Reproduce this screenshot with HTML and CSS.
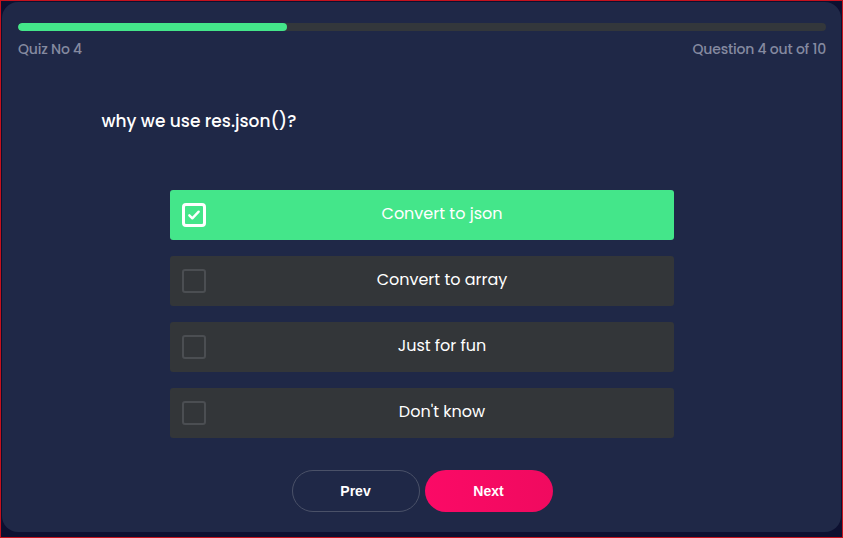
FILE: index.html
```html
<!DOCTYPE html>
<html lang="en">
<head>
<meta charset="utf-8">
<title>Quiz</title>
<link rel="stylesheet" href="styles.css">
</head>
<body>
<main class="card">
  <div class="progress"><div class="progress-fill" style="width: 33.3%"></div></div>
  <div class="meta">
    <span>Quiz No 4</span>
    <span>Question 4 out of 10</span>
  </div>
  <h1 class="question">why we use res.json()?</h1>
  <ul class="options">
    <li class="option selected">
      <span class="box"><svg viewBox="0 0 24 24" width="16" height="16"><path d="M5 12.5l4.5 4.5L19 7" fill="none" stroke="#fff" stroke-width="3.6" stroke-linecap="round" stroke-linejoin="round"/></svg></span>
      <span class="label">Convert to json</span>
    </li>
    <li class="option"><span class="box"></span><span class="label">Convert to array</span></li>
    <li class="option"><span class="box"></span><span class="label">Just for fun</span></li>
    <li class="option"><span class="box"></span><span class="label">Don't know</span></li>
  </ul>
  <div class="nav">
    <button class="btn btn-prev">Prev</button>
    <button class="btn btn-next">Next</button>
  </div>
</main>
</body>
</html>
```
FILE: styles.css
```css
* { box-sizing: border-box; }
html, body { margin: 0; height: 100%; }
body {
  background: #0d1030;
  border: 1px solid #c4121d;
  padding: 1px 1px 5px 1px;
  font-family: "Poppins", "Open Sans", "Noto Sans", sans-serif;
}
.card {
  height: 100%;
  background: #1f2847;
  border-radius: 16px;
  padding: 21px 15px 0 16px;
  display: flex;
  flex-direction: column;
}
.progress {
  height: 8px;
  background: #33373b;
  border-radius: 4px;
  overflow: hidden;
}
.progress-fill {
  height: 100%;
  background: #44e68a;
  border-radius: 4px;
}
.meta {
  display: flex;
  justify-content: space-between;
  margin-top: 8px;
  font-size: 14px;
  font-weight: 500;
  line-height: 20px;
  color: #858aa0;
  letter-spacing: -0.2px;
}
.question {
  width: 641px;
  margin: 51px auto 0;
  padding-right: 1px;
  font-size: 17px;
  font-weight: 500;
  line-height: 22px;
  color: #fff;
}
.options {
  list-style: none;
  margin: 58px auto 0;
  padding: 0;
  width: 504px;
  display: flex;
  flex-direction: column;
  gap: 16px;
}
.option {
  height: 50px;
  background: #333639;
  border-radius: 3px;
  display: flex;
  align-items: center;
  padding-left: 12px;
  color: #fff;
  font-size: 16px;
}
.option.selected { background: #44e68a; }
.box {
  flex: none;
  width: 24px;
  height: 24px;
  border: 2px solid #4b4e52;
  border-radius: 3px;
  display: flex;
  align-items: center;
  justify-content: center;
}
.selected .box { border: 3px solid #fff; border-radius: 4px; }
.label {
  flex: 1;
  margin-left: 4px;
  padding-bottom: 4px;
  text-align: center;
}
.nav {
  display: flex;
  justify-content: center;
  gap: 5px;
  margin-top: 32px;
}
.btn {
  width: 128px;
  height: 42px;
  border-radius: 21px;
  padding-bottom: 2px;
  font-family: "Liberation Sans", Arial, sans-serif;
  font-weight: 700;
  font-size: 14px;
  color: #fff;
  cursor: pointer;
}
.btn-prev {
  background: transparent;
  border: 1px solid #4a5168;
}
.btn-next {
  background: linear-gradient(90deg, #fb0a66, #f00a5f);
  border: none;
}
```
